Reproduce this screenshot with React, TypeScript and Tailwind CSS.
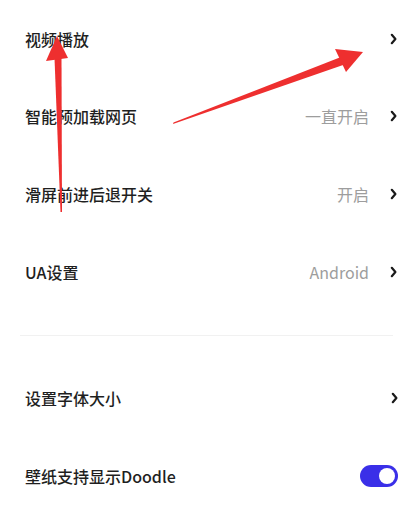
import React from "react";

const Chevron = () => (
  <svg width="7" height="12" viewBox="0 0 7 12" className="shrink-0">
    <path d="M1.8 1.8 L5.4 6 L1.8 10.2" fill="none" stroke="#1a1a1a" strokeWidth="2.2" strokeLinecap="round" strokeLinejoin="round" />
  </svg>
);

const Row = ({ label, value, h = "h-[78px]", chevron = true, children }: { label: string; value?: string; h?: string; chevron?: boolean; children?: React.ReactNode }) => (
  <div className={`flex items-center justify-between ${h}`}>
    <span className="text-[16px] text-[#1f1f1f] font-medium">{label}</span>
    <div className="flex items-center gap-[21px]">
      {value && <span className="text-[16px] text-[#9d9d9d]">{value}</span>}
      {chevron && <Chevron />}
      {children}
    </div>
  </div>
);

export default function App() {
  return (
    <div className="relative w-[413px] h-[507px] overflow-hidden bg-white" style={{ fontFamily: '"Noto Sans CJK SC", "Noto Sans", sans-serif' }}>
      <div className="pl-[25px] pr-[16px]">
        <Row label="视频播放" h="h-[77px]" />
        <Row label="智能预加载网页" value="一直开启" />
        <Row label="滑屏前进后退开关" value="开启" />
        <Row label="UA设置" value="Android" />
      </div>
      <div className="mt-[24px] mx-[20px] h-px bg-[#f1f1f1]" />
      <div className="mt-[23px] pl-[25px] pr-[15px]">
        <Row label="设置字体大小" />
        <Row label="壁纸支持显示Doodle" chevron={false}>
          <div className="w-[38px] h-[22px] rounded-full bg-[#3a2fe8] flex items-center justify-end pr-[3px]">
            <div className="w-[16px] h-[16px] rounded-full bg-white" />
          </div>
        </Row>
      </div>
      <svg className="absolute inset-0 pointer-events-none" width="413" height="507" viewBox="0 0 413 507">
        <polygon points="54.5,58 61.5,58 62,212 60.5,212" fill="#ee2f2f" />
        <polygon points="57,36 46,61 68,58" fill="#ee2f2f" />
        <polygon points="173,124 173.5,122.5 341,57 344.5,64.5" fill="#ee2f2f" />
        <polygon points="363,52 335,49 346,72" fill="#ee2f2f" />
      </svg>
    </div>
  );
}
